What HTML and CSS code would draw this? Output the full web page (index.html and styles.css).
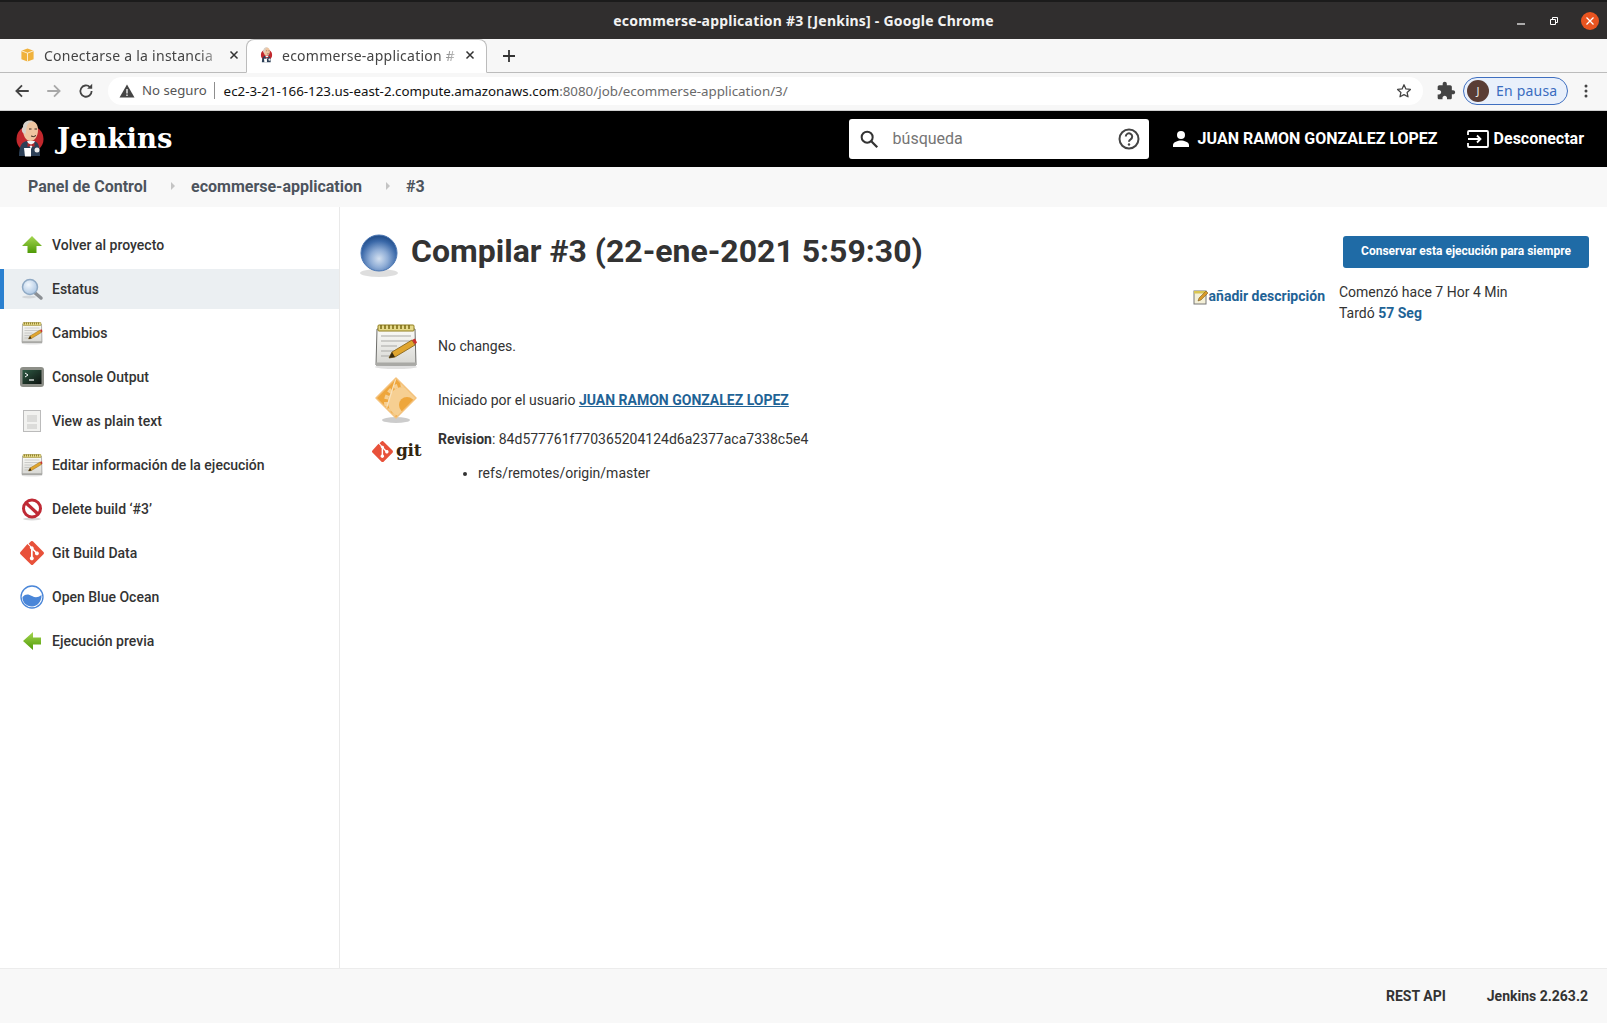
FILE: index.html
```html
<!DOCTYPE html>
<html lang="es">
<head>
<meta charset="utf-8">
<title>ecommerse-application #3 [Jenkins]</title>
<link rel="stylesheet" href="styles.css">
</head>
<body>
<svg class="defs" width="0" height="0" aria-hidden="true">
  <defs>
    <radialGradient id="g-sphere" cx="50%" cy="66%" r="62%">
      <stop offset="0" stop-color="#d3e0f0"/><stop offset=".4" stop-color="#8fadd6"/><stop offset=".8" stop-color="#3a68a8"/><stop offset="1" stop-color="#24508c"/>
    </radialGradient>
    <linearGradient id="g-up" x1="0" y1="0" x2="0" y2="1"><stop offset="0" stop-color="#a5d651"/><stop offset="1" stop-color="#4e9a06"/></linearGradient>
    <linearGradient id="g-paper" x1="0" y1="0" x2="0" y2="1"><stop offset="0" stop-color="#fbfbf8"/><stop offset="1" stop-color="#d6d6d2"/></linearGradient>
    <linearGradient id="g-term" x1="0" y1="0" x2="1" y2="1"><stop offset="0" stop-color="#2f5a44"/><stop offset="1" stop-color="#0d120f"/></linearGradient>
    <radialGradient id="g-lens" cx="40%" cy="35%" r="70%"><stop offset="0" stop-color="#f3f8fd"/><stop offset="1" stop-color="#a9c4e2"/></radialGradient>
    <clipPath id="c-diamond"><path d="M24 2l20 20-20 20L4 22z"/></clipPath>
    <symbol id="i-notepad" viewBox="0 0 48 48">
      <ellipse cx="24" cy="45" rx="21" ry="2" fill="#000" opacity=".12"/>
      <path d="M5 7h38l1 36H4z" fill="url(#g-paper)" stroke="#6d6d6a" stroke-width="1"/>
      <path d="M4 40.500h40V43.500H4z" fill="#a9a9a5"/>
      <rect x="6" y="3" width="36" height="6" rx="1" fill="#e5d98a" stroke="#8f7d1c"/>
      <path d="M9 3v4M13 3v4M17 3v4M21 3v4M25 3v4M29 3v4M33 3v4M37 3v4" stroke="#7a6a10" stroke-width="1.500"/>
      <path d="M9 14h30M9 19h30M9 24h16M9 29h13M9 34h12" stroke="#a9a9a6" stroke-width="1"/>
      <path d="M17 36l3-6 20-12 3 5-20 12z" fill="#e0a52e" stroke="#7d5a14" stroke-width=".8"/>
      <path d="M17 36l3-6 3 5z" fill="#3a2c10"/>
      <path d="M40 18l3-1.500 2 4-2 2z" fill="#c9302c"/>
    </symbol>
    <symbol id="i-gear" viewBox="0 0 48 48">
      <ellipse cx="24" cy="44" rx="14" ry="3" fill="#000" opacity=".2"/>
      <path d="M24 2l20 20-20 20L4 22z" fill="#eea63c"/>
      <g clip-path="url(#c-diamond)">
        <circle cx="31" cy="26" r="15" fill="#f6cf92"/>
        <circle cx="31" cy="26" r="17" fill="none" stroke="#f6cf92" stroke-width="4" stroke-dasharray="4 3"/>
        <circle cx="35" cy="29" r="8" fill="#eea63c"/>
        <path d="M24 2L12 40" stroke="#f9e2bc" stroke-width="1.200"/>
      </g>
      <path d="M24 2l20 20-20 20L4 22z" fill="none" stroke="#f4c27c" stroke-width="1.500" stroke-linejoin="round"/>
    </symbol>
    <symbol id="i-git" viewBox="0 0 24 24">
      <path d="M23.500 10.900L13.100.5c-.7-.7-1.700-.7-2.300 0L8.600 2.700l2.700 2.700c.7-.2 1.400-.1 1.900.5.6.6.7 1.300.5 2l2.600 2.600c.7-.2 1.400-.1 2 .4.800.8.800 2 0 2.800-.8.800-2 .8-2.800 0-.6-.6-.7-1.400-.4-2.100l-2.400-2.400v6.300c.2.100.4.200.5.400.8.800.8 2 0 2.800-.8.800-2 .8-2.800 0-.8-.8-.8-2 0-2.800.2-.2.400-.3.6-.4V8.100c-.2-.1-.4-.2-.6-.4-.6-.6-.7-1.400-.4-2.100L7.400 3 .5 10.900c-.7.7-.7 1.700 0 2.300l10.400 10.400c.7.7 1.700.7 2.300 0l10.300-10.300c.6-.7.6-1.700 0-2.400z" fill="#e8513a"/>
    </symbol>
    <symbol id="i-butler" viewBox="0 0 28 38">
      <circle cx="14" cy="19" r="13.500" fill="#c2282d"/>
      <path d="M3 36c0-10 3-15 9-15h5c5 0 7 5 7 15z" fill="#2d4057"/>
      <path d="M11 21h8l-4 8z" fill="#f4f4f4"/>
      <path d="M11.500 23l3.500 1.500 3.500-1.500v4l-3.500-1.500-3.500 1.500z" fill="#b3262a"/>
      <path d="M7 10C7 4 10 1 14.500 1S22 4 22 10s-3 11-7.500 11S7 16 7 10z" fill="#efc5a0"/>
      <path d="M7 13C5 10 6 8 7 7c0-4 3-6.500 7-6.500 2 0 3 .5 4 1-4 0-7 2-7.500 6.500L9.500 14z" fill="#d8d2ca"/>
      <path d="M13 9h2.500M18.500 9H21M15 16q3 1.500 5-.5" stroke="#3a2a20" stroke-width="1" fill="none"/>
      <path d="M8 28h7v8.500H9z" fill="#fff"/>
      <circle cx="21" cy="30" r="2.500" fill="#eee"/>
    </symbol>
  </defs>
</svg>

<header class="titlebar">
  <span class="titlebar-text">ecommerse-application #3 [Jenkins] - Google Chrome</span>
  <div class="winctl">
    <svg class="wc" viewBox="0 0 12 12"><path d="M2 9h8" stroke="#fff" stroke-width="1.200"/></svg>
    <svg class="wc" viewBox="0 0 12 12"><path d="M2.500 4.500h5v5h-5z M4.500 4V2.500h5v5H8" fill="none" stroke="#fff" stroke-width="1"/></svg>
    <span class="wc-close"><svg viewBox="0 0 12 12"><path d="M2.500 2.500l7 7M9.500 2.500l-7 7" stroke="#fff" stroke-width="1.300"/></svg></span>
  </div>
</header>

<nav class="tabstrip">
  <div class="tab">
    <svg class="favicon" viewBox="0 0 16 16"><path d="M8 1l6.500 2.500v9L8 15l-6.500-2.500v-9z" fill="#f0b23c"/><path d="M1.500 3.500L8 6l6.500-2.500M8 6v9" stroke="#fff" stroke-width=".8" fill="none"/></svg>
    <span class="tab-title fade">Conectarse a la instancia |</span>
    <svg class="tab-x" viewBox="0 0 10 10"><path d="M1.500 1.500l7 7M8.500 1.500l-7 7" stroke="#333" stroke-width="1.500"/></svg>
  </div>
  <div class="tab active">
    <svg class="favicon" viewBox="0 0 28 38"><use href="#i-butler"/></svg>
    <span class="tab-title fade">ecommerse-application #</span>
    <svg class="tab-x" viewBox="0 0 10 10"><path d="M1.500 1.500l7 7M8.500 1.500l-7 7" stroke="#333" stroke-width="1.500"/></svg>
  </div>
  <svg class="tab-plus" viewBox="0 0 14 14"><path d="M7 1v12M1 7h12" stroke="#333" stroke-width="1.800"/></svg>
</nav>

<div class="addressbar">
  <svg class="nav-ic" viewBox="0 0 16 16"><path d="M14 8H3M8 3L3 8l5 5" fill="none" stroke="#444" stroke-width="1.600"/></svg>
  <svg class="nav-ic" viewBox="0 0 16 16"><path d="M2 8h11M8 3l5 5-5 5" fill="none" stroke="#a8a8a8" stroke-width="1.600"/></svg>
  <svg class="nav-ic" viewBox="0 0 16 16"><path d="M13 8a5 5 0 1 1-1.500-3.500" fill="none" stroke="#444" stroke-width="1.600"/><path d="M13.500 1.500v4.500H9z" fill="#444"/></svg>
  <div class="omnibox">
    <svg class="warn" viewBox="0 0 16 16"><path d="M8 1.500L15.500 14.500H.5z" fill="#444"/><path d="M8 6v4.500M8 11.500v1.500" stroke="#fff" stroke-width="1.300"/></svg>
    <span class="notsecure">No seguro</span>
    <span class="url"><span class="url-host">ec2-3-21-166-123.us-east-2.compute.amazonaws.com</span>:8080/job/ecommerse-application/3/</span>
    <svg class="star" viewBox="0 0 16 16"><path d="M8 1.800l1.900 4.100 4.500.5-3.300 3 .9 4.400L8 11.600l-4 2.200.9-4.400-3.300-3 4.500-.5z" fill="none" stroke="#444" stroke-width="1.300" stroke-linejoin="round"/></svg>
  </div>
  <svg class="puzzle" viewBox="0 0 24 24"><path d="M20.500 11H19V7c0-1.100-.9-2-2-2h-4V3.500C13 2.120 11.880 1 10.500 1S8 2.120 8 3.500V5H4c-1.100 0-1.990.9-1.990 2v3.800H3.500c1.490 0 2.700 1.210 2.700 2.700s-1.210 2.700-2.700 2.700H2V20c0 1.100.9 2 2 2h3.800v-1.500c0-1.490 1.210-2.700 2.700-2.700 1.490 0 2.700 1.210 2.700 2.700V22H17c1.100 0 2-.9 2-2v-4h1.500c1.380 0 2.500-1.120 2.500-2.500S21.880 11 20.500 11z" fill="#444"/></svg>
  <div class="profile"><span class="avatar">J</span><span class="profile-text">En pausa</span></div>
  <svg class="dots" viewBox="0 0 4 16"><circle cx="2" cy="3" r="1.500" fill="#444"/><circle cx="2" cy="8" r="1.500" fill="#444"/><circle cx="2" cy="13" r="1.500" fill="#444"/></svg>
</div>

<div class="jk-header">
  <svg class="jk-logo" viewBox="0 0 28 38"><use href="#i-butler"/></svg>
  <span class="jk-name">Jenkins</span>
  <div class="search">
    <svg class="search-ic" viewBox="0 0 24 24"><circle cx="10" cy="10" r="6" fill="none" stroke="#333" stroke-width="2.200"/><path d="M14.500 14.500L21 21" stroke="#333" stroke-width="2.500"/></svg>
    <span class="search-ph">búsqueda</span>
    <svg class="help-ic" viewBox="0 0 24 24"><circle cx="12" cy="12" r="9.500" fill="none" stroke="#444" stroke-width="2"/><path d="M8.800 9.500a3.200 3.200 0 1 1 4.800 2.800c-1 .6-1.600 1.200-1.600 2.400" fill="none" stroke="#444" stroke-width="2"/><circle cx="12" cy="17.500" r="1.200" fill="#444"/></svg>
  </div>
  <svg class="user-ic" viewBox="0 0 18 18"><circle cx="9" cy="5" r="4" fill="#fff"/><path d="M1 17v-2c0-3 5-4.500 8-4.500s8 1.500 8 4.500v2z" fill="#fff"/></svg>
  <span class="jk-user">JUAN RAMON GONZALEZ LOPEZ</span>
  <svg class="logout-ic" viewBox="0 0 22 18"><path d="M1 5V2a1 1 0 0 1 1-1h18a1 1 0 0 1 1 1v14a1 1 0 0 1-1 1H2a1 1 0 0 1-1-1v-3" fill="none" stroke="#fff" stroke-width="1.800"/><path d="M1 9h12M10 5.500L13.500 9 10 12.500" fill="none" stroke="#fff" stroke-width="1.800"/></svg>
  <span class="jk-logout">Desconectar</span>
</div>

<div class="breadcrumb">
  <span class="crumb crumb-first">Panel de Control</span>
  <span class="crumb-sep"></span>
  <span class="crumb">ecommerse-application</span>
  <span class="crumb-sep"></span>
  <span class="crumb">#3</span>
</div>

<div class="page">
  <aside class="sidebar">
    <a class="side-item">
      <svg class="side-ic" viewBox="0 0 24 24"><path d="M12 3l10 10h-5.500v7h-9v-7H2z" fill="url(#g-up)"/></svg>
      <span>Volver al proyecto</span>
    </a>
    <a class="side-item current">
      <svg class="side-ic" viewBox="0 0 24 24"><ellipse cx="9" cy="20" rx="7" ry="1.500" fill="#000" opacity=".1"/><path d="M14.500 15.500l6.500 5.500" stroke="#8b8f94" stroke-width="3.500" stroke-linecap="round"/><circle cx="10" cy="10" r="7.500" fill="url(#g-lens)" stroke="#8fa9c4" stroke-width="1.500"/></svg>
      <span>Estatus</span>
    </a>
    <a class="side-item">
      <svg class="side-ic" viewBox="0 0 48 48"><use href="#i-notepad"/></svg>
      <span>Cambios</span>
    </a>
    <a class="side-item">
      <svg class="side-ic" viewBox="0 0 24 24"><rect x="0" y="2" width="24" height="20" rx="3" fill="#8d8f88"/><rect x="2.500" y="5" width="19" height="14" fill="url(#g-term)"/><path d="M5 8l3 2-3 2" stroke="#fff" stroke-width="1" fill="none"/><path d="M9 15h5" stroke="#fff" stroke-width="1.200"/></svg>
      <span>Console Output</span>
    </a>
    <a class="side-item">
      <svg class="side-ic" viewBox="0 0 24 24"><rect x="3.500" y="1.500" width="17" height="21" fill="#f2f2f0" stroke="#bbb"/><path d="M7 6h10v7H7zM7 15h10v5H7z" fill="#dcdcda"/></svg>
      <span>View as plain text</span>
    </a>
    <a class="side-item">
      <svg class="side-ic" viewBox="0 0 48 48"><use href="#i-notepad"/></svg>
      <span>Editar información de la ejecución</span>
    </a>
    <a class="side-item">
      <svg class="side-ic" viewBox="0 0 24 24"><ellipse cx="12" cy="22" rx="9" ry="1.500" fill="#000" opacity=".15"/><circle cx="12" cy="11.500" r="8.500" fill="#fff" stroke="#bf2a35" stroke-width="3"/><path d="M6 6l12 11" stroke="#bf2a35" stroke-width="3.200"/></svg>
      <span>Delete build ‘#3’</span>
    </a>
    <a class="side-item">
      <svg class="side-ic" viewBox="0 0 24 24"><use href="#i-git"/></svg>
      <span>Git Build Data</span>
    </a>
    <a class="side-item">
      <svg class="side-ic" viewBox="0 0 24 24"><circle cx="12" cy="12" r="11" fill="#fff" stroke="#4a86d8" stroke-width="1.300"/><path d="M2.500 12c3-3.500 6-3 9.500-1s6 1.500 9.500-1c.5 6-4 11.500-9.500 11.500S2 17 2.500 12z" fill="#4a86d8"/></svg>
      <span>Open Blue Ocean</span>
    </a>
    <a class="side-item">
      <svg class="side-ic" viewBox="0 0 24 24"><path d="M3 12l10-9v5.500h8v7h-8V21z" fill="url(#g-up)"/></svg>
      <span>Ejecución previa</span>
    </a>
  </aside>

  <main class="content">
    <div class="title-row">
      <svg class="ball" viewBox="0 0 48 48"><ellipse cx="24" cy="42" rx="19" ry="4" fill="#000" opacity=".13"/><circle cx="24" cy="22" r="18" fill="url(#g-sphere)" stroke="#4d78b4" stroke-width="1"/></svg>
      <h1 class="build-title">Compilar #3 (22-ene-2021 5:59:30)</h1>
      <button class="keep-btn">Conservar esta ejecución para siempre</button>
    </div>
    <div class="body-row">
      <div class="details">
        <div class="detail detail-nochange">
          <svg class="detail-ic" viewBox="0 0 48 48"><use href="#i-notepad"/></svg>
          <span>No changes.</span>
        </div>
        <div class="detail detail-user">
          <svg class="detail-ic" viewBox="0 0 48 48"><use href="#i-gear"/></svg>
          <span>Iniciado por el usuario <a class="user-link">JUAN RAMON GONZALEZ LOPEZ</a></span>
        </div>
        <div class="detail detail-git">
          <div class="git-ic">
            <svg class="git-diamond" viewBox="0 0 24 24"><use href="#i-git"/></svg>
            <span class="git-word">git</span>
          </div>
          <div class="git-text">
            <div><b class="med">Revision</b>: 84d577761f770365204124d6a2377aca7338c5e4</div>
            <ul class="refs"><li>refs/remotes/origin/master</li></ul>
          </div>
        </div>
      </div>
      <div class="desc">
        <svg class="desc-ic" viewBox="0 0 16 16"><rect x="1" y="2" width="12" height="13" fill="#f4f0d8" stroke="#777"/><path d="M1 2h12v2.500H1z" fill="#d9c552"/><path d="M5 12l1-3 7-7 2 2-7 7z" fill="#d99a2a" stroke="#6b4d12" stroke-width=".5"/></svg>
        <a class="desc-link">añadir descripción</a>
      </div>
      <div class="timing">
        <div>Comenzó hace 7 Hor 4 Min</div>
        <div>Tardó <a class="time-link">57 Seg</a></div>
      </div>
    </div>
  </main>
</div>

<footer class="footer">
  <span class="foot-link">REST API</span>
  <span class="foot-link">Jenkins 2.263.2</span>
</footer>
</body>
</html>
```
FILE: styles.css
```css
* { box-sizing: border-box; }
html, body { margin: 0; height: 100%; }
body {
  display: flex; flex-direction: column; height: 1023px; overflow: hidden;
  font-family: Roboto, "Liberation Sans", sans-serif; font-size: 14px; color: #333; background: #fff;
}
.defs { position: absolute; }

.titlebar {
  height: 39px; flex: none; background: #302e2e; border-top: 2px solid #1b1b1b;
  display: flex; align-items: center; justify-content: center; position: relative;
}
.titlebar-text { font-family: "Noto Sans", sans-serif; font-weight: 700; font-size: 14px; letter-spacing: .22px; color: #f2f2f2; }
.winctl { position: absolute; right: 8px; top: 0; bottom: 0; display: flex; align-items: center; gap: 21px; }
.wc { width: 12px; height: 12px; }
.wc-close { width: 18px; height: 18px; border-radius: 50%; background: #e95420; display: flex; align-items: center; justify-content: center; }
.wc-close svg { width: 12px; height: 12px; }

.tabstrip {
  height: 34px; flex: none; background: #f7f7f7; border-bottom: 1px solid #bcbcbc;
  display: flex; align-items: stretch; padding-left: 8px; font-family: "Noto Sans", sans-serif;
}
.tab { width: 238px; display: flex; align-items: center; padding: 0 7px 1px 12px; gap: 9px; color: #444; }
.tab.active {
  width: 241px; height: 34px; background: #fff; border: 1px solid #bcbcbc; border-bottom: 1px solid #fff;
  border-radius: 8px 8px 0 0; padding: 0 11px 2px 12px; gap: 8px;
}
.favicon { width: 15px; height: 16px; flex: none; }
.tab-title { flex: 1; min-width: 0; white-space: nowrap; font-size: 14px; letter-spacing: .25px; }
.fade { -webkit-mask-image: linear-gradient(to right, #000 88%, transparent 104%); mask-image: linear-gradient(to right, #000 88%, transparent 104%); }
.tab-x { width: 10px; height: 10px; flex: none; }
.tab-plus { width: 14px; height: 14px; align-self: center; margin-left: 15px; }

.addressbar {
  height: 38px; flex: none; background: #f7f7f7; border-bottom: 1px solid #cfcfcf;
  display: flex; align-items: center; padding: 0 0 2px 13px; font-family: "Noto Sans", sans-serif;
}
.nav-ic { width: 18px; height: 18px; margin-right: 14px; flex: none; }
.omnibox {
  width: 1315px; height: 28px; margin-left: -1px; background: #fff; border-radius: 14px;
  display: flex; align-items: center; padding-left: 11px; flex: none;
}
.warn { width: 16px; height: 16px; flex: none; }
.notsecure { margin-left: 7px; font-size: 13.200px; color: #555; padding-right: 7px; border-right: 1px solid #8e8e8e; line-height: 17px; }
.url { margin-left: 9px; font-size: 13.330px; color: #6a6a6a; white-space: nowrap; }
.url-host { color: #111; }
.star { width: 16px; height: 16px; margin-left: auto; margin-right: 11px; flex: none; }
.puzzle { width: 20px; height: 20px; margin-left: 13px; flex: none; }
.profile {
  width: 105px; height: 28px; margin-left: 7px; flex: none; border: 1px solid #3f6fc0; border-radius: 14px;
  background: #e9f0fb; display: flex; align-items: center; padding-left: 3px;
}
.avatar { width: 22px; height: 22px; border-radius: 50%; background: #5a3d35; color: #eee; font-size: 11px; display: flex; align-items: center; justify-content: center; }
.profile-text { margin-left: 7px; font-size: 14px; color: #3a6cc0; letter-spacing: .2px; }
.dots { width: 4px; height: 16px; margin-left: 16px; flex: none; }

.jk-header {
  height: 56px; flex: none; background: #000; display: flex; align-items: center; padding: 0 23px 0 16px; color: #fff;
}
.jk-logo { width: 28px; height: 38px; flex: none; }
.jk-name { margin-left: 13px; padding-bottom: 2px; font-family: "DejaVu Serif", serif; font-weight: 700; font-size: 27.500px; }
.search {
  width: 300px; height: 40px; margin-left: auto; background: #fff; border-radius: 3px;
  display: flex; align-items: center; padding: 0 8px 0 9px;
}
.search-ic { width: 22px; height: 22px; flex: none; }
.search-ph { margin-left: 13px; padding-bottom: 2px; font-size: 16px; color: #757575; }
.help-ic { width: 24px; height: 24px; margin-left: auto; flex: none; }
.user-ic { width: 18px; height: 18px; margin-left: 23px; flex: none; }
.jk-user { margin-left: 8px; padding-bottom: 2px; font-size: 16px; font-weight: 700; white-space: nowrap; }
.logout-ic { width: 22px; height: 18px; margin-left: 29px; flex: none; }
.jk-logout { margin-left: 5px; padding-bottom: 2px; font-size: 16px; font-weight: 700; }

.breadcrumb {
  height: 40px; flex: none; background: #f8f8f8; display: flex; align-items: center; padding: 0 0 2px 28px;
}
.crumb { font-size: 16px; font-weight: 700; color: #4d545d; white-space: nowrap; }
.crumb-sep { width: 0; height: 0; margin: 0 16px 0 24px; border-left: 4px solid #c4c4c4; border-top: 4px solid transparent; border-bottom: 4px solid transparent; }

.page { flex: 1; min-height: 0; display: flex; }
.sidebar { width: 340px; flex: none; border-right: 1px solid #e9e9e9; padding-top: 18px; display: flex; flex-direction: column; gap: 4px; }
.side-item {
  height: 40px; display: flex; align-items: center; padding-left: 20px; gap: 8px;
  font-weight: 500; font-size: 14px; color: #333;
}
.side-item.current { background: #ebeff2; border-left: 4px solid #2a80d0; padding-left: 16px; }
.side-ic { width: 24px; height: 24px; flex: none; }

.content { flex: 1; min-width: 0; padding: 26px 18px 0 15px; }
.title-row { display: flex; align-items: flex-start; margin-bottom: 2px; }
.ball { width: 48px; height: 48px; flex: none; margin-top: -2px; }
.build-title { margin: 0 0 0 8px; font-size: 32px; font-weight: 700; line-height: 36px; color: #333; white-space: nowrap; }
.keep-btn {
  margin-left: auto; margin-top: 3px; width: 246px; height: 32px; padding: 0 0 2px; border: 0; border-radius: 3px; background: #1f6ba6;
  color: #fff; font-family: Roboto, sans-serif; font-weight: 700; font-size: 12px;
}
.body-row { display: flex; align-items: flex-start; }
.details { flex: 1; padding-left: 17px; }
.detail { display: flex; align-items: center; gap: 18px; }
.detail-ic { width: 48px; height: 48px; flex: none; }
.detail-nochange { margin-top: 41px; }
.detail-user { margin-top: 6px; }
.detail-git { align-items: flex-start; margin-top: 5px; }
.git-ic { width: 48px; flex: none; display: flex; align-items: center; gap: 3px; margin-top: 12px; }
.git-diamond { width: 21px; height: 21px; flex: none; }
.git-word { font-family: "DejaVu Serif", serif; font-weight: 700; font-size: 17px; letter-spacing: -.3px; line-height: 21px; color: #33250f; margin-top: -3px; }
.git-text { line-height: 20px; }
.med { font-weight: 700; }
.refs { margin: 14px 0 0; padding-left: 40px; }
.user-link { color: #1f6396; font-weight: 700; text-decoration: underline; }
.desc { display: flex; align-items: flex-start; margin-top: 5px; margin-right: 14px; }
.desc-ic { width: 16px; height: 16px; margin-top: 3px; flex: none; }
.desc-link { color: #1f6396; font-weight: 700; line-height: 20px; white-space: nowrap; }
.timing { width: 250px; flex: none; line-height: 21px; margin-top: 1px; }
.time-link { color: #1f6396; font-weight: 700; }

.footer {
  height: 55px; flex: none; background: #f8f8f8; border-top: 1px solid #ececec;
  display: flex; align-items: center; justify-content: flex-end; gap: 41px; padding-right: 19px;
}
.foot-link { font-weight: 700; font-size: 14px; color: #333; }
```
